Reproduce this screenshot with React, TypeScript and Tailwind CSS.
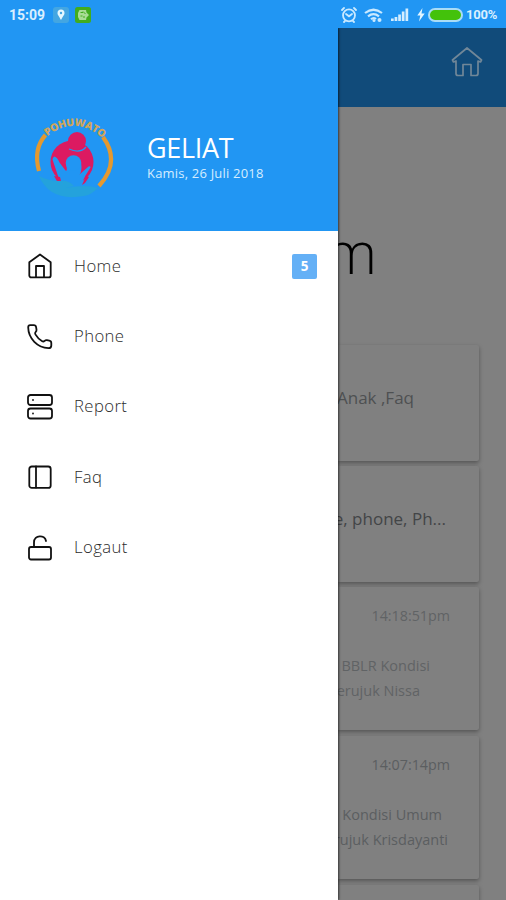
import type { ReactNode } from 'react';

interface MenuItemProps {
  icon: ReactNode;
  label: string;
  badge?: string;
}

// one row of the side menu
const MenuItem = ({ icon, label, badge }: MenuItemProps) => (
  <li className="flex h-[70.4px] items-center pl-[27px] pr-[21px]">
    <svg
      width="26"
      height="26"
      viewBox="0 0 26 26"
      fill="none"
      stroke="#111"
      strokeWidth="1.8"
      strokeLinecap="round"
      strokeLinejoin="round"
      className="shrink-0"
    >
      {icon}
    </svg>
    <span className="mb-[2px] ml-[21px] flex-1 text-[16.7px] font-light tracking-[0.4px] text-[#2b2b2b]">{label}</span>
    {badge && (
      <span className="flex h-[25px] w-[25px] items-center justify-center rounded-[2px] bg-[#64b0f6] text-[13.5px] font-bold text-white">
        {badge}
      </span>
    )}
  </li>
);

const menu: MenuItemProps[] = [
  {
    label: 'Home',
    badge: '5',
    icon: (
      <>
        <path d="M2.3 9.2 13 1.5l10.7 7.7v13.2a2 2 0 0 1-2 2H4.3a2 2 0 0 1-2-2z" />
        <path d="M9 24.2V13h8v11.2" />
      </>
    ),
  },
  {
    label: 'Phone',
    icon: (
      <path d="M3.2 1.2h3.6q2 0 2.3 2l.4 2.5q.2 1.3-.8 2.2c-.9.9-.9 1.5-.3 2.5 1.5 2.6 4.2 5.3 6.8 6.8 1 .6 1.5.5 2.4-.3q1-.9 2.3-.7l2.4.4q2 .4 2 2.3v2.5q0 2.7-2.8 2.7C10.5 23.8 1.4 14.5 1.2 3.6Q1.2 1.2 3.2 1.2z" />
    ),
  },
  {
    label: 'Report',
    icon: (
      <>
        <rect x="1" y="1" width="24" height="10" rx="2.5" />
        <rect x="1" y="14.5" width="24" height="10" rx="2.5" />
        <path d="M6 6h.01M6 19.5h.01" />
      </>
    ),
  },
  {
    label: 'Faq',
    icon: (
      <>
        <rect x="2.3" y="2.5" width="21.4" height="21.4" rx="2.5" />
        <path d="M9 2.5v21" />
      </>
    ),
  },
  {
    label: 'Logaut',
    icon: (
      <>
        <rect x="2" y="12" width="22" height="12.5" rx="2" />
        <path d="M7 11.5V7.5c0-8 11-8 12-1.5" />
      </>
    ),
  },
];

const Logo = () => (
  <svg width="90" height="90" viewBox="0 0 90 90" fill="none" className="shrink-0">
    <defs>
      <path id="arc" d="M12 30Q45-3 80 32" />
    </defs>
    <text fill="#d0a55a" fontSize="10.5" fontWeight="800" fontFamily="Open Sans, sans-serif">
      <textPath href="#arc" startOffset="50%" textAnchor="middle" textLength="61">
        POHUWATO
      </textPath>
    </text>
    <path d="M16.5 23Q4 37 10 59" stroke="#e5992f" strokeWidth="4.2" />
    <path d="M74 25Q92 50 70 74" stroke="#e5992f" strokeWidth="4.2" />
    {/* parent hugging the child */}
    <circle cx="43" cy="50" r="21.5" fill="#dc1a61" />
    <circle cx="48" cy="29" r="9" fill="#dc1a61" />
    <path d="M40 37q11 5 17-2" stroke="#2196f3" strokeWidth="1.3" />
    <path
      d="M25.5 44.5q3 1 5 6l6 8q2 1 1-4a7.5 7.5 0 1 1 15 0q0 6-2 8l9-8q2-1 2 1l-5 8-5 10q-7 3-18 0l-4-8-6-18q0-2 2-3z"
      fill="#2196f3"
    />
    <circle cx="44.5" cy="51" r="7.8" fill="#2196f3" />
    <path d="M28 69h29l-5 7H34z" fill="#2196f3" />
    <path d="M25 64l6 1 2 8-4-2zM57 64l3 1-4 6-3 2z" fill="#dc1a61" />
    <path d="M10 64q10 5 20 5 10-1 15 5l-8 2q20-4 32 0-7 7-14 8-34 6-45-20z" fill="#24a2dc" />
  </svg>
);

const Line = ({ className, children }: { className: string; children: ReactNode }) => (
  <div className={`flex justify-end overflow-hidden whitespace-nowrap ${className}`}>
    <span>{children}</span>
  </div>
);

const card = 'shrink-0 rounded-r-[2px] bg-[#808080] shadow-[0_2px_4px_rgba(0,0,0,0.35)]';

const StatusBar = () => (
  <header className="z-20 flex h-7 shrink-0 items-center bg-[#2196f3] pl-[9px] pr-[6px] pt-[2px] font-[Roboto,sans-serif] text-[#d9efff]">
    <span className="w-[44px] text-[14px] font-bold">15:09</span>
    <svg width="16" height="16" viewBox="0 0 16 16">
      <rect width="16" height="16" rx="3" fill="#43a6e2" />
      <path d="M8 13C6 9 4.5 8 4.5 6a3.5 3.5 0 0 1 7 0C11.5 8 10 9 8 13z" fill="#e5f8ff" />
      <circle cx="8" cy="6" r="1.2" fill="#43a6e2" />
    </svg>
    <svg width="16" height="16" viewBox="0 0 16 16" className="ml-[6px]">
      <rect width="16" height="16" rx="2.5" fill="#42ac1e" />
      <path d="M4.5 3h6.5l.5 2.500 2.500 2.500-2.500 2.500-.5 2.500H4.500L3 10V6z" fill="#a9dc95" />
      <path d="M5.500 5.500H8M8 4.500 10.500 7M5.500 9h2M9 9v2" fill="none" stroke="#42ac1e" />
    </svg>
    <div className="flex-1" />
    <svg width="16" height="16" viewBox="0 0 16 16" fill="none" stroke="#c9e9ff" strokeWidth="1.8" strokeLinecap="round" className="mr-px">
      <circle cx="8" cy="8.3" r="6" />
      <path d="m5 7 3 2.3L11 7M1 3l2-2M13 1l2 2M4 14l-1 1M12 14l1 1" />
    </svg>
    <svg width="19" height="15" viewBox="0 0 19 15" fill="none" stroke="#c9e9ff" strokeWidth="2.2" className="ml-[6px]">
      <path d="M1 5Q9.5-1.5 18 5M4 8.3Q9.5 4 15 8.3M7 11.3Q9.5 9 12 11" />
      <circle cx="10" cy="12.5" r="1.5" fill="#c9e9ff" stroke="none" />
      <circle cx="15.5" cy="12" r="2" fill="#c9e9ff" stroke="none" />
    </svg>
    <svg width="18" height="14" viewBox="0 0 18 14" fill="#d4edff" className="ml-[8px]">
      <path d="M0 10.5h2.700V13H0zM3.600 9h2.700v4H3.600zM7.200 6.500h2.700V13H7.200zM10.800 3.500h2.700V13h-2.700zM14.500 .500h2.700V13h-2.700z" />
    </svg>
    <svg width="8" height="14" viewBox="0 0 8 14" fill="#e3f5ff" className="ml-[8px]">
      <path d="M5.500 0 .300 7.500h3L2 13.500l5.700-8H4.500z" />
    </svg>
    <span className="ml-[3px] h-[14px] w-[35px] rounded-full border-2 border-[#aadcf6] bg-[#43c20b]" />
    <span className="ml-[3px] w-[34px] whitespace-nowrap text-[13px] font-bold tracking-[-0.2px]">100%</span>
  </header>
);

export default function App() {
  return (
    <div className="flex h-[900px] w-[506px] flex-col overflow-hidden bg-[#808080] font-['Open_Sans',sans-serif]">
      <StatusBar />
      <div className="flex min-h-0 flex-1">
        {/* drawer */}
        <aside className="z-10 flex w-[338px] shrink-0 flex-col bg-white shadow-[1px_0_2px_rgba(0,0,0,0.6)]">
          <div className="flex h-[203px] shrink-0 items-start bg-[#2196f3] pl-[29px] pt-[84px] text-white">
            <Logo />
            <div className="ml-[28px] pt-[19px]">
              <h1 className="text-[27px] leading-[34px] tracking-[-0.3px]">GELIAT</h1>
              <p className="mt-px text-[13px] leading-[15px] tracking-[0.2px] text-[#d5edff]">Kamis, 26 Juli 2018</p>
            </div>
          </div>
          <ul>
            {menu.map((item) => (
              <MenuItem key={item.label} {...item} />
            ))}
          </ul>
        </aside>

        {/* dimmed page */}
        <main className="flex min-w-0 flex-1 flex-col">
          <div className="flex h-[79px] shrink-0 justify-end bg-[#114b7a] pr-[23px] pt-[19px]">
            <svg width="32" height="31" viewBox="0 0 32 31" fill="none" stroke="#718798" strokeWidth="1.7" strokeLinejoin="round">
              <path d="M16 1 1.500 13l1 2 2.500-1v12.500q0 2 2 2h5V17.500h8v11h5q2 0 2-2V14l2.500 1 1-2z" />
            </svg>
          </div>
          <Line className="h-[238px] shrink-0 pr-[129px] pt-[104px] text-[59px] font-light leading-[80px] text-black">m</Line>
          <div className="flex w-[141px] flex-col gap-[5px]">
            <section className={`${card} h-[116px] pt-[40px]`}>
              <Line className="pr-[65px] text-[17px] leading-[25px] text-[#4e5052]">Anak ,Faq</Line>
            </section>
            <section className={`${card} h-[116px] pt-[40px]`}>
              <Line className="pr-[33px] text-[17px] leading-[25px] text-[#434547]">e, phone, Ph...</Line>
            </section>
            <section className={`${card} h-[143px] pt-[16px] text-[14.5px] leading-[25px] text-[#606365]`}>
              <Line className="pr-[29px] text-[14.3px]">14:18:51pm</Line>
              <Line className="mt-[25px] pr-[49px]">BBLR Kondisi</Line>
              <Line className="pr-[59px]">erujuk Nissa</Line>
            </section>
            <section className={`${card} mt-px h-[143px] pt-[16px] text-[14.5px] leading-[25px] text-[#5b5e60]`}>
              <Line className="pr-[29px] text-[14.3px]">14:07:14pm</Line>
              <Line className="mt-[25px] pr-[37px]">Kondisi Umum</Line>
              <Line className="pr-[31px]">rujuk Krisdayanti</Line>
            </section>
            <section className={`${card} mt-px h-[60px]`} />
          </div>
        </main>
      </div>
    </div>
  );
}
